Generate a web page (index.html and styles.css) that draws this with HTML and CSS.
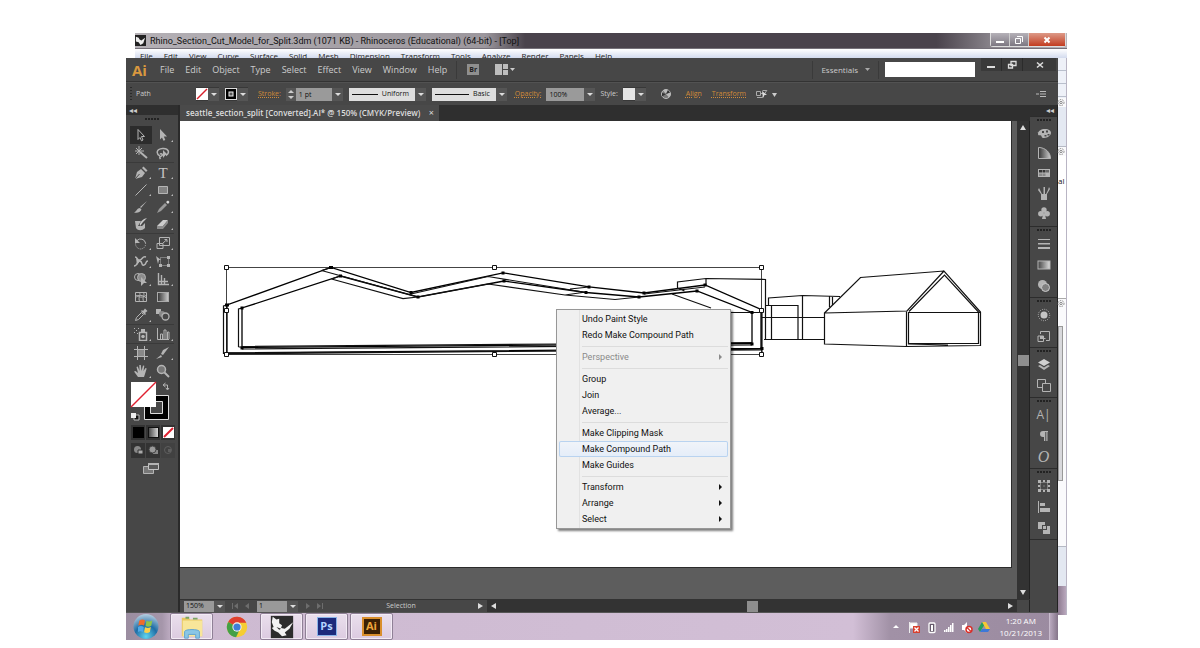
FILE: index.html
```html
<!DOCTYPE html>
<html lang="en">
<head>
  <meta charset="UTF-8" />
  <meta name="viewport" content="width=device-width, initial-scale=1.0" />
  <title>seattle_section_split - Illustrator</title>
  <link rel="stylesheet" href="styles.css">
</head>
<body>
<div class="desktop">

  <!-- Rhino window, behind -->
  <header class="rhino-title">
    <svg class="rhino-icon" viewBox="0 0 12 12"><rect width="12" height="12" fill="#222"/><path d="M1 2l3 1 1 2 2 1 4-3-2 6-3 2-2-3-3-1z" fill="#eee"/></svg>
    <span class="rhino-name">Rhino_Section_Cut_Model_for_Split.3dm (1071 KB) - Rhinoceros (Educational) (64-bit) - [Top]</span>
    <div class="win-buttons">
      <button aria-label="Minimize"><svg viewBox="0 0 12 10"><path d="M2 6h8v2H2z" fill="#fff"/></svg></button>
      <button aria-label="Restore"><svg viewBox="0 0 12 10"><path d="M4 1.500h5.500V7M2.500 3.500h5v5h-5z" fill="none" stroke="#fff"/></svg></button>
      <button class="red" aria-label="Close"><svg viewBox="0 0 12 10"><path d="M3.500 2.500l5 5M8.500 2.500l-5 5" stroke="#fff" stroke-width="2"/></svg></button>
    </div>
  </header>
  <nav class="rhino-menu">
    <span>File</span><span>Edit</span><span>View</span><span>Curve</span><span>Surface</span><span>Solid</span><span>Mesh</span><span>Dimension</span><span>Transform</span><span>Tools</span><span>Analyze</span><span>Render</span><span>Panels</span><span>Help</span>
  </nav>

  <div class="screen">
    <div class="front">
      <div class="ai">
        <!-- menu bar -->
        <div class="menubar">
          <span class="ai-logo">Ai</span>
          <nav class="menus">
            <button>File</button><button>Edit</button><button>Object</button><button>Type</button><button>Select</button><button>Effect</button><button>View</button><button>Window</button><button>Help</button>
          </nav>
          <i class="vsep"></i>
          <button class="bridge">Br</button>
          <button class="arrange" aria-label="Arrange documents"><svg viewBox="0 0 20 11"><path d="M0 0h7v11H0zM8 0h5v5H8zM8 6h5v5H8z" fill="#bdbdbd"/><path d="M15 4h5l-2.500 3z" fill="#ccc"/></svg></button>
          <div class="menubar-right">
            <i class="vsep"></i>
            <button class="workspace">Essentials <svg viewBox="0 0 5 3"><path d="M0 0h5L2.500 3z" fill="#aaa"/></svg></button>
            <i class="vsep"></i>
            <input class="search" type="text" aria-label="Search">
            <div class="ai-win">
              <button aria-label="Minimize"><svg viewBox="0 0 12 12"><path d="M2 7h8v2H2z" fill="#ddd"/></svg></button>
              <button aria-label="Restore"><svg viewBox="0 0 12 12"><path d="M5 2.500h5v4H5zM2.500 5.500h4v3.500h-4z" fill="none" stroke="#ddd" stroke-width="1.300"/></svg></button>
              <button aria-label="Close"><svg viewBox="0 0 12 12"><path d="M3 3.500l6 5M9 3.500l-6 5" stroke="#ddd" stroke-width="1.600"/></svg></button>
            </div>
          </div>
        </div>

        <!-- control bar -->
        <div class="control">
          <i class="grip-v"></i>
          <span class="obj">Path</span>
          <button class="swatch" aria-label="Fill"><svg viewBox="0 0 12 12"><rect width="12" height="12" fill="#fff"/><path d="M1 11L11 1" stroke="#d8202c" stroke-width="1.500"/></svg><i class="dd"></i></button>
          <button class="swatch" aria-label="Stroke colour"><svg viewBox="0 0 12 12"><rect x=".5" y=".5" width="11" height="11" fill="#000" stroke="#ddd"/><rect x="4" y="4" width="4" height="4" fill="#555" stroke="#eee"/></svg><i class="dd"></i></button>
          <label class="link" for="weight">Stroke:</label>
          <div class="combo">
            <i class="spin"></i><input id="weight" type="text" value="1 pt"><button class="dd" aria-label="Weights"></button>
          </div>
          <button class="profile"><i class="stroke-line"></i>Uniform<i class="dd"></i></button>
          <button class="profile brush"><i class="stroke-line"></i>Basic<i class="dd"></i></button>
          <label class="link" for="opacity">Opacity:</label>
          <div class="combo"><input id="opacity" type="text" value="100%"><button class="dd" aria-label="Opacity values"></button></div>
          <span class="style-label">Style:</span>
          <button class="swatch" aria-label="Style"><svg viewBox="0 0 12 12"><rect width="12" height="12" fill="#e4e4e4"/></svg><i class="dd"></i></button>
          <button class="recolor" aria-label="Recolor"><svg viewBox="0 0 12 12"><circle cx="6" cy="6" r="4.500" fill="#777" stroke="#bbb"/><path d="M6 6L3 2.500A4.500 4.500 0 0 1 8 2zM6 6l4-1.500A4.500 4.500 0 0 1 9 9.500z" fill="#bbb"/><path d="M6 6L2 5v3.500zM6 6l2-4 2 2.500z" fill="#333"/></svg></button>
          <a class="link" href="#">Align</a>
          <a class="link" href="#">Transform</a>
          <button class="isolate" aria-label="Isolate"><svg viewBox="0 0 22 10"><path d="M.5 2.500h4v4h-4zM1 8.500h5M5 4.500h2M6.500 1.500h4M11 1L6 9" fill="none" stroke="#aaa"/><path d="M6 2l5 4H8.500L7 9z" fill="#ddd"/><path d="M16 4h5l-2.500 4z" fill="#ccc"/></svg></button>
          <svg class="flyout" viewBox="0 0 10 8"><path d="M0 4h3M4 1.500h6M4 4h6M4 6.500h6" stroke="#bbb"/></svg>
        </div>

        <div class="work">
          <!-- tools -->
          <aside class="tools">
            <div class="panel-head"><span>◂◂</span></div>
            <i class="grip"></i>
            <div class="group">
              <button class="tool on" aria-label="Selection"><svg viewBox="0 0 14 14"><path d="M4 1.500l6.500 7H7.500l1.500 3.500-1.500.8L6 9.500l-2 2z" class="ln"/></svg></button>
              <button class="tool more" aria-label="Direct selection"><svg viewBox="0 0 14 14"><path d="M4 1l7 7.500H7.800L9.300 12l-1.800.8L6 9.500 4 11.500z"/></svg></button>
              <button class="tool" aria-label="Magic wand"><svg viewBox="0 0 14 14"><path d="M6 6l7 6" class="ln th"/><path d="M5 0v9M1 5h9M2 2l6 6M8 2L2 8" class="ln"/></svg></button>
              <button class="tool" aria-label="Lasso"><svg viewBox="0 0 14 14"><path d="M4 10C0 8 0 3 6.500 2.500S14 7 10 9.500M4 8c2-1 3 1 1.500 2S3 11 4.500 13" class="ln" stroke-width="1.500"/><path d="M7 4l5 5H9.500l-2.500 3z"/></svg></button>
            </div>
            <div class="group tight">
              <button class="tool more" aria-label="Pen"><svg viewBox="0 0 14 14"><path d="M1 13l2-7 4-3 4 4-3 4z"/><path d="M8 2l1.500-1.500 4 4L12 6z"/><path d="M1 13l4.500-5" stroke="#474747"/></svg></button>
              <button class="tool more type" aria-label="Type">T</button>
              <button class="tool more" aria-label="Line"><svg viewBox="0 0 14 14"><path d="M1.500 12.500l11-11" class="ln"/></svg></button>
              <button class="tool more" aria-label="Rectangle"><svg viewBox="0 0 14 14"><path d="M2.500 3.500h9v7h-9z" fill="#828282" stroke="#b4b4b4"/></svg></button>
              <button class="tool" aria-label="Paintbrush"><svg viewBox="0 0 14 14"><path d="M13 1L7 8l-1-1zM6 8l1.500 1.500C6 13 3 13 0 12.500 3 11 3 8 6 8z"/></svg></button>
              <button class="tool more" aria-label="Pencil"><svg viewBox="0 0 14 14"><path d="M1 13l2-4 6-6 2 2-6 6z" fill="#999"/><path d="M10 2l2-1.500L13.500 2 12 4z" fill="#ddd"/></svg></button>
              <button class="tool" aria-label="Blob brush"><svg viewBox="0 0 14 14"><path d="M1 4h6L4 9h4l3-3v5c-3 3-7 3-9 0z"/><path d="M13 1L9 5 6 9C5 5 9 2 13 1z" fill="#ccc"/></svg></button>
              <button class="tool more" aria-label="Eraser"><svg viewBox="0 0 14 14"><path d="M1 9l6-6h5L7 9z" fill="#ccc"/><path d="M1 9h6v3H1zM7 9l5-6v3l-5 6z" fill="#8c8c8c"/></svg></button>
            </div>
            <div class="group">
              <button class="tool more" aria-label="Rotate"><svg viewBox="0 0 14 14"><path d="M3 4.500a5 5 0 0 1 8.500 2.500" class="ln"/><path d="M11.500 7A5 5 0 1 1 3 4.500" class="ln" stroke-dasharray="1 1"/><path d="M1 2v5h5z"/></svg></button>
              <button class="tool more" aria-label="Scale"><svg viewBox="0 0 14 14"><path d="M3.500 1.500h10v8h-10zM1 7.500h6v5H1zM7 7l4-3.500M8.500 3.500H11V6" class="ln"/></svg></button>
              <button class="tool more" aria-label="Width"><svg viewBox="0 0 14 14"><path d="M0 12c4 0 3-6 6-5s1 5 4 4 1-4 4-4M1 3c3 0 2 4 5 3s2-4 6-3" class="ln" stroke-width="1.500"/><path d="M2 4l4 3-3 4z"/></svg></button>
              <button class="tool" aria-label="Free transform"><svg viewBox="0 0 14 14"><path d="M4.500 3.500h8v8h-8z" class="ln" stroke-dasharray="1 1"/><path d="M0 2l5 4H3l-1 4zM11 2h3v3h-3zM11 10h3v3h-3zM3 10h3v3H3z"/></svg></button>
              <button class="tool more" aria-label="Shape builder"><svg viewBox="0 0 14 14"><circle cx="4" cy="5" r="3.500" class="ln"/><circle cx="7.500" cy="5.500" r="4" fill="#8c8c8c" stroke="#b4b4b4"/><path d="M7 5l6 6h-3l-3 3z"/></svg></button>
              <button class="tool more" aria-label="Perspective grid"><svg viewBox="0 0 14 14"><path d="M2.500 1v11.500H13M5.500 3v9M8.500 6v6M2 9.500h10" class="ln" stroke-width="1.400"/></svg></button>
              <button class="tool" aria-label="Mesh"><svg viewBox="0 0 14 14"><path d="M1.500 2.500h11v9h-11zM1 8c4-4 4 2 12-3M5 2c3 4-2 5 1 10M9 2c3 4-2 5 1 10M1 5c4 2 7-2 12 4" class="ln"/></svg></button>
              <button class="tool" aria-label="Gradient"><svg viewBox="0 0 14 14"><rect x="1.500" y="2.500" width="11" height="9" fill="url(#g)" stroke="#aaa"/></svg></button>
              <button class="tool more" aria-label="Eyedropper"><svg viewBox="0 0 14 14"><path d="M1.500 12.500l1-3 5-5 2 2-5 5z" class="ln"/><path d="M7 3l1-1 1 1 2-2.500 2.500 2.500L11 5l1 1-1 1z"/></svg></button>
              <button class="tool" aria-label="Blend"><svg viewBox="0 0 14 14"><path d="M0 1h5v5H0z"/><circle cx="6" cy="6" r="3" fill="#888"/><circle cx="9.500" cy="8.500" r="3.500" fill="#474747" stroke="#b4b4b4" stroke-width="1.300"/></svg></button>
            </div>
            <div class="group">
              <button class="tool more" aria-label="Symbol sprayer"><svg viewBox="0 0 14 14"><path d="M5.500 5.500h7v8h-7z" class="ln" stroke-width="1.500"/><path d="M7 2h4v3H7zM0 1h1v1H0zM2 3h1v1H2zM4 1h1v1H4zM0 5h1v1H0zM3 6h1v1H3z"/><circle cx="9" cy="9.500" r="1.800"/></svg></button>
              <button class="tool more" aria-label="Graph"><svg viewBox="0 0 14 14"><path d="M1.500 1v11.500H13M4.500 12V7h2v5M8 12V3h2v9M11.500 12V5h1.500v7" class="ln"/></svg></button>
            </div>
            <div class="group">
              <button class="tool" aria-label="Artboard"><svg viewBox="0 0 14 14"><path d="M3.500 0v14M10.500 0v14M0 3.500h14M0 10.500h14" class="ln"/><path d="M4 4h6v6H4z" fill="#888"/></svg></button>
              <button class="tool more" aria-label="Slice"><svg viewBox="0 0 14 14"><path d="M13 1L7 4 5 8l2 1zM5 9L0 13l6-2z"/></svg></button>
              <button class="tool more" aria-label="Hand"><svg viewBox="0 0 14 14"><path d="M4 13L0 7.500 1.500 7 4 9 2.500 3l1.300-.5L5.500 7 5.300 1h1.500l.7 6L9 1.500l1.300.3L9.500 7l2-3 1.200.6L11 10l-1 3z"/></svg></button>
              <button class="tool" aria-label="Zoom"><svg viewBox="0 0 14 14"><circle cx="5.500" cy="5.500" r="4" fill="#777" stroke="#b4b4b4" stroke-width="1.500"/><path d="M8.500 8.500l4.500 4.500" class="ln th"/></svg></button>
            </div>
            <svg class="fillstroke" viewBox="0 0 44 40">
              <path d="M14.500 14.500h24v24h-24z" fill="#000" stroke="#ddd"/>
              <path d="M20.500 20.500h12v12h-12z" fill="#474747" stroke="#ddd"/>
              <path d="M1 1h25v25H1z" fill="#fff"/><path d="M1 26L26 1" stroke="#e02030" stroke-width="1.500"/>
              <path d="M34 4h3.500v4M35.500 2L33 4l2.500 2M36 7l1.500 2L39 7" class="ln"/>
              <path d="M4 34h5v5H4z" fill="#111" stroke="#bbb"/><path d="M1 32h5v5H1z" fill="#eee"/>
            </svg>
            <div class="modes">
              <button aria-label="Color"><svg viewBox="0 0 11 11"><rect width="11" height="11" fill="#000"/></svg></button>
              <button aria-label="Gradient fill"><svg viewBox="0 0 11 11"><rect x=".5" y=".5" width="10" height="10" fill="url(#g2)" stroke="#111"/></svg></button>
              <button aria-label="None"><svg viewBox="0 0 11 11"><rect width="11" height="11" fill="#fff"/><path d="M1 10l9-9" stroke="#e02030" stroke-width="2"/></svg></button>
            </div>
            <div class="modes draw">
              <button aria-label="Draw normal"><svg viewBox="0 0 11 11"><circle cx="4.500" cy="4.500" r="3.500" fill="#888"/><path d="M5 5h5v4H5z" fill="#aaa" stroke="#333"/></svg></button>
              <button aria-label="Draw behind"><svg viewBox="0 0 11 11"><path d="M5 5h5v4H5z" fill="#888"/><circle cx="4.500" cy="4.500" r="3.500" fill="#999" stroke="#444"/></svg></button>
              <button aria-label="Draw inside"><svg viewBox="0 0 11 11"><circle cx="5" cy="5" r="3.500" fill="none" stroke="#5e5e5e"/><path d="M5 4h3v3H5z" fill="#5e5e5e"/></svg></button>
            </div>
            <button class="screenmode" aria-label="Screen mode"><svg viewBox="0 0 16 14"><path d="M.5 4.500h10v7H.5z" fill="#777" stroke="#b4b4b4"/><path d="M5.500 1.500h10v6h-10z" fill="#5a5a5a" stroke="#c4c4c4"/><path d="M5 1h11v2H5z"/></svg></button>
          </aside>

          <!-- document -->
          <main class="document">
            <div class="tabs"><div class="tab">seattle_section_split [Converted].AI* @ 150% (CMYK/Preview)<button aria-label="Close tab">×</button></div></div>
            <div class="view">
              <div class="pasteboard">
                <div class="artboard">
                  <svg class="drawing" viewBox="180 121 831 446" preserveAspectRatio="xMinYMin">
                    <!-- selection bounds -->
                    <path d="M226.500 267.500h535v87h-535z" class="bounds"/>
                    <!-- section cut -->
                    <path class="cut" d="M227 353V305L331 267.500 411 292.500 503 272.800 589 286.800 644 293 705 285 761 309.500V348.500L227 353"/>
                    <path class="cut" d="M242 347.500V308L340.500 276 418 297 504 281 586 292.500 639 297 697 291 752 312.500V343.500L242 347.500"/>
                    <path class="thin" d="M223.500 354V306L227 305M238.500 347V309L242 308M238.500 347h4M321.500 270.500L418 297M331.500 279L403 298.700 418 297M488 276.500L565 289 586 292.500M488 276.500L411 294M488 284L565 295 615 299.500 639 297M418 297L488 284M570 289l19-2M565 295l21-3M321.500 270.500L331 267.500M331.500 279l9-3"/>
                    <path class="thin" d="M224 354L560 351 762 349M242 349L752 345M242 346.500L560 344 752 342.500M224 353L762 350"/>
                    <path class="thin" d="M677.500 289V282L706 278.500 765.500 279.500V339M706 278.500V286M677.500 288l7 3M672 294L711 308M644 294L705 287M731 312.500h31"/>
                    <!-- sheds -->
                    <path class="thin" d="M768.500 305V298L802.500 295.500 840 296.500M766 305.500h32V339M771.500 305v34M802.500 295.500V339M764 339.500h60M762 317.500h62M829.500 296.500V307M832.500 296.500V305M762 310v44"/>
                    <!-- house -->
                    <path class="thin" d="M824.500 313L860.500 277.500 944 271 980.500 312V345.500L906.500 346.500 824.500 344V313L907 311 944 271M906.500 311V346.500M909 311.500L944.500 275 978.500 312V343.500L908.500 343.500V312.500H980.500M908 344l40 1"/>
                    <path d="M225 303.500h4v3h-4zM329 266h4v3h-4zM339 274.500h3v3h-3zM409.500 291h3v3h-3zM416.500 295.500h3v3h-3zM501.500 271.500h3v3h-3zM502.500 279.500h3v3h-3zM587.500 285.500h3v3h-3zM584.500 291h3v3h-3zM642.500 291.500h3v3h-3zM637.500 295.500h3v3h-3zM703.500 283.500h3v3h-3zM695.500 289.500h3v3h-3zM750.500 311h3v3h-3zM750.500 342.500h3v3h-3zM760.500 347h3v3h-3zM240.500 306.500h3v3h-3zM240.500 346.500h3v3h-3z"/>
                    <path class="handle" d="M224.500 265.500h4v4h-4zM492.500 265.500h4v4h-4zM759.500 265.500h4v4h-4zM224.500 308.500h4v4h-4zM759.500 308.500h4v4h-4zM224.500 352.500h4v4h-4zM492.500 352.500h4v4h-4zM759.500 352.500h4v4h-4z"/>
                  </svg>
                  <div class="context-menu">
                    <button>Undo Paint Style</button>
                    <button>Redo Make Compound Path</button>
                    <hr>
                    <button class="sub" disabled>Perspective</button>
                    <hr>
                    <button>Group</button>
                    <button>Join</button>
                    <button>Average...</button>
                    <hr>
                    <button>Make Clipping Mask</button>
                    <button class="hover">Make Compound Path</button>
                    <button>Make Guides</button>
                    <hr>
                    <button class="sub">Transform</button>
                    <button class="sub">Arrange</button>
                    <button class="sub">Select</button>
                  </div>
                </div>
              </div>
              <div class="vscroll"><i class="up"></i><i class="thumb"></i><i class="down"></i></div>
            </div>
            <div class="status">
              <div class="status-left">
                <input class="zoom" type="text" value="150%" aria-label="Zoom level"><button class="dd" aria-label="Zoom levels"></button>
                <svg class="nav" viewBox="0 0 18 8"><path d="M0 1h1v6H0zM6 1v6L2 4zM17 1v6l-4-3z" fill="#6d6d6d"/></svg>
                <input class="page" type="text" value="1" aria-label="Artboard"><button class="dd" aria-label="Artboards"></button>
                <svg class="nav" viewBox="0 0 18 8"><path d="M1 1v6l4-3zM12 1v6l4-3zM17 1h1v6h-1z" fill="#6d6d6d"/></svg>
                <span class="status-text">Selection</span>
                <i class="right"></i>
              </div>
              <div class="hscroll"><i class="left"></i><i class="thumb"></i><i class="right"></i></div>
              <i class="corner"></i>
            </div>
          </main>

          <!-- panel dock -->
          <aside class="dock">
            <div class="panel-head"><span>◂◂</span></div>
            <div class="dock-group">
              <i class="grip"></i>
              <button aria-label="Color"><svg viewBox="0 0 14 14"><path d="M1 8c0-3 3-5 7-5s6 2 6 4-3 5-7 5c-3 0-2-2-3-2.500S1 10 1 8z"/><path d="M5 5h2v2H5zM9 4.500h2v2H9zM10.500 8h2v1.500h-2zM7.500 9h2v1.500h-2z" fill="#474747"/><path d="M0 6l5 1-1 1z"/></svg></button>
              <button aria-label="Color guide"><svg viewBox="0 0 14 14"><path d="M1.500 1.500v11h12c0-6-5-11-12-11z" fill="url(#g)" stroke="#b4b4b4"/></svg></button>
              <button aria-label="Swatches"><svg viewBox="0 0 14 14"><path d="M1 3h12v8H1z"/><path d="M2 4h3v2.500H2zM5.500 4h3v2.500h-3z" fill="#333"/><path d="M9 4h3v2.500H9z" fill="#666"/><path d="M2 7.500h3V10H2zM5.500 7.500h3V10h-3z" fill="#888"/></svg></button>
              <button aria-label="Brushes"><svg viewBox="0 0 14 14"><path d="M4 8h6v6H4zM6.500 1h1.500v7H6.500zM3 4l2 4H4L1 4l1-2zM9 8l2-4 1-3 1 2-3 5z"/></svg></button>
              <button aria-label="Symbols"><svg viewBox="0 0 14 14"><circle cx="7" cy="4" r="2.700"/><circle cx="3.800" cy="7.800" r="2.700"/><circle cx="10.200" cy="7.800" r="2.700"/><path d="M6.500 6h1l1.500 7H5z"/></svg></button>
            </div>
            <div class="dock-group">
              <i class="grip"></i>
              <button aria-label="Stroke"><svg viewBox="0 0 14 14"><path d="M1 2h12v1H1zM1 6h12v1.500H1zM1 10h12v2H1z"/></svg></button>
              <button aria-label="Gradient panel"><svg viewBox="0 0 14 14"><rect x="1" y="3" width="12" height="8" fill="url(#g2)" stroke="#b4b4b4"/></svg></button>
              <button aria-label="Transparency"><svg viewBox="0 0 14 14"><circle cx="5.500" cy="5.500" r="4.500"/><circle cx="8.500" cy="8.500" r="4" fill="#808080" stroke="#ccc"/></svg></button>
            </div>
            <div class="dock-group">
              <i class="grip"></i>
              <button aria-label="Appearance"><svg viewBox="0 0 14 14"><circle cx="7" cy="7" r="3.500" fill="#c4c4c4"/><circle cx="7" cy="7" r="5.700" class="ln" stroke-dasharray="1 1.200"/></svg></button>
              <button aria-label="Graphic styles"><svg viewBox="0 0 14 14"><path d="M3.500 5V2.500h9v9H9M1 7h5.500v5.500H1zM3.500 9.500h5" class="ln"/><path d="M3 7h4v3H3z"/></svg></button>
            </div>
            <div class="dock-group">
              <i class="grip"></i>
              <button aria-label="Layers"><svg viewBox="0 0 14 14"><path d="M7 1l6 3.500L7 8 1 4.500z" fill="#d0d0d0"/><path d="M1 8l2-1 4 2.500L11 7l2 1-6 4z"/></svg></button>
              <button aria-label="Artboards"><svg viewBox="0 0 14 14"><path d="M5 8.500H.500v-8h8V4M5.500 4.500h8v8h-8z" class="ln"/></svg></button>
            </div>
            <div class="dock-group">
              <i class="grip"></i>
              <button class="glyph" aria-label="Character">A|</button>
              <button aria-label="Paragraph"><svg viewBox="0 0 14 14"><path d="M11 2H6a3 3 0 0 0 0 6h1v4h1.300V3h1v9H10.500V3H11z"/></svg></button>
              <button class="glyph it" aria-label="OpenType">O</button>
            </div>
            <div class="dock-group">
              <i class="grip"></i>
              <button aria-label="Transform"><svg viewBox="0 0 14 14"><path d="M3.500 3.500h7v7h-7z" class="ln" stroke-dasharray="1 1"/><path d="M1 1h3v3H1zM6 1h2v2H6zM10 1h3v3h-3zM1 6h2v2H1zM6.500 6.500h1v1h-1zM11 6h2v2h-2zM1 10h3v3H1zM6 11h2v2H6zM10 10h3v3h-3z"/></svg></button>
              <button aria-label="Align"><svg viewBox="0 0 14 14"><path d="M1 1h1v12H1zM3 3h5v3H3zM3 8h10v4H3z"/></svg></button>
              <button aria-label="Pathfinder"><svg viewBox="0 0 14 14"><path d="M1 1h7v3H5v4H1zM6 5h3v3H6zM10 5h3v8H6V9h4z"/></svg></button>
            </div>
          </aside>
        </div>
      </div>

      <footer class="taskbar">
        <button class="start" aria-label="Start"><svg viewBox="0 0 28 28"><circle cx="14" cy="14" r="13" fill="url(#orb)"/><path d="M7 8c2-1.500 4-1.500 6-.3l-1 5.300c-2-1-4-1-6 .3z" fill="#ee6b2d"/><path d="M14.500 8c2 1.200 4 1 6-.3l-1 5.500c-2 1.300-4 1.300-6 .3z" fill="#8fc54a"/><path d="M5.700 14.500c2-1.200 4-1.200 6 0l-1 5.200c-2-1-3.500-1-5 0z" fill="#4fa8e8"/><path d="M13 14.700c2 1.200 4 1 6-.2l-1 5.300c-2 1.200-4 1.200-6 .2z" fill="#fbd04a"/></svg></button>
        <button class="task open" aria-label="Explorer"><svg viewBox="0 0 28 28"><path d="M3 4h7l2 2h13v18H3z" fill="#e8c860"/><path d="M4 7h21v17H4z" fill="#f8e69a"/><path d="M7 3h4v2H7zM15 4h5v2h-5z" fill="#7ba464"/><path d="M6 26v-7c0-3 16-3 16 0v7h-4v-4h-8v4z" fill="#8ac6e6" stroke="#5fa3cf"/></svg></button>
        <button class="task" aria-label="Chrome"><svg viewBox="0 0 28 28"><circle cx="14" cy="14" r="11" fill="#f5cd32"/><path d="M14 14L4.500 8.500A11 11 0 0 1 24 9.500H14z" fill="#df3e2f"/><path d="M14 14L4.500 8.500A11 11 0 0 0 13 25l4-8.500z" fill="#43a047"/><circle cx="14" cy="14" r="5" fill="#f4f4f4"/><circle cx="14" cy="14" r="3.900" fill="#3f7fd8"/></svg></button>
        <button class="task open" aria-label="Rhinoceros"><svg viewBox="0 0 28 28"><rect x="2" y="2" width="24" height="24" fill="#2c2c2c"/><path d="M4 3l4 3 3-1 0 5 3 2-1 3 4 1 9-7-4 7-5 4 2 3-5 1-4-4-4-2-3-3 2-1-2-5z" fill="#f2f2f2"/><path d="M8 14l5 2-2 1z" fill="#2c2c2c"/></svg></button>
        <button class="task open" aria-label="Photoshop"><span class="app ps">Ps</span></button>
        <button class="task open" aria-label="Illustrator"><span class="app il">Ai</span></button>
        <div class="tray">
          <svg viewBox="0 0 90 14" class="tray-icons">
            <path d="M0 8h6L3 5z" fill="#fff"/>
            <path d="M16.500 2v11M17 3h7v5h-7z" fill="#fff" stroke="#eee"/><path d="M20 6h7v7h-7z" fill="#d8402f"/><path d="M21.500 7.500l4 4M25.500 7.500l-4 4" stroke="#fff" stroke-width="1.300"/>
            <rect x="36" y="3" width="6" height="9.500" rx="1" fill="#665a6b" stroke="#fff" stroke-width="1.300"/><path d="M38 5h2v6h-2z" fill="#fff"/>
            <path d="M51 10h1.500v2H51zM53 9h1.500v3H53zM55 7h1.500v5H55zM57 5h1.500v7H57zM59 3h1.500v9H59z" fill="#fff"/>
            <path d="M69 5h2l3-3v11l-3-3h-2z" fill="#fff"/><circle cx="76" cy="9.500" r="3" fill="#fff" stroke="#d8302a" stroke-width="1.500"/><path d="M74 7.500l4 4" stroke="#d8302a" stroke-width="1.300"/>
          </svg>
          <svg class="drive" viewBox="0 0 12 12"><path d="M4 1h4l4 7H8z" fill="#f6c834"/><path d="M4 1l2 3.500L2 11 0 8z" fill="#25a05a"/><path d="M4 8h8l-2 3H2z" fill="#3c78d8"/></svg>
          <div class="clock"><span>1:20 AM</span><span>10/21/2013</span></div>
          <button class="show-desktop" aria-label="Show desktop"></button>
        </div>
      </footer>
    </div>

    <!-- right edge of the window behind -->
    <div class="rhino-edge">
      <i class="e-bars"></i>
      <svg viewBox="0 0 9 9"><circle cx="4" cy="4.500" r="3" fill="none" stroke="#888" stroke-dasharray="1.500 1"/><circle cx="4" cy="4.500" r="1.200" fill="none" stroke="#888"/></svg>
      <i class="e-panel"></i>
      <svg viewBox="0 0 9 9"><circle cx="4" cy="4.500" r="3" fill="none" stroke="#888" stroke-dasharray="1.500 1"/><circle cx="4" cy="4.500" r="1.200" fill="none" stroke="#888"/></svg>
      <div class="e-list"><span>al</span></div>
      <svg viewBox="0 0 9 9"><circle cx="4" cy="4.500" r="3" fill="none" stroke="#888" stroke-dasharray="1.500 1"/><circle cx="4" cy="4.500" r="1.200" fill="none" stroke="#888"/></svg>
      <div class="e-scroll"><i></i></div>
      <i class="e-foot"></i>
      <i class="e-frame"></i>
    </div>
  </div>
</div>

<svg width="0" height="0" class="defs">
  <defs>
    <linearGradient id="g"><stop offset="0" stop-color="#333"/><stop offset="1" stop-color="#ccc"/></linearGradient>
    <linearGradient id="g2"><stop offset="0" stop-color="#444"/><stop offset="1" stop-color="#ddd"/></linearGradient>
    <radialGradient id="orb" cx=".5" cy=".9" r=".9"><stop offset="0" stop-color="#5fd4ee"/><stop offset=".5" stop-color="#1f6ea6"/><stop offset="1" stop-color="#b8cfe0"/></radialGradient>
  </defs>
</svg>
</body>
</html>
```

FILE: styles.css
```css
* { box-sizing: border-box; }
body { margin: 0; background: #fff; font-family: "Open Sans", "Noto Sans", sans-serif; font-size: 8px; line-height: 12px; color: #ccc; }
button, input { font: inherit; color: inherit; margin: 0; padding: 0; border: 0; background: none; border-radius: 0; min-width: 0; }
button { display: flex; align-items: center; justify-content: center; white-space: nowrap; }
svg { display: block; flex: none; }
i { display: block; flex: none; }
.defs { position: absolute; }
.desktop { padding: 33px 133px 0 126px; }

/* rhino */
.rhino-title { display: flex; align-items: center; height: 16px; margin-left: 9px; background: linear-gradient(90deg, #b4b0b5 0, #9c979d 350px, #4a434c 390px, #4a434c 86%, #8a858c 92%, #b8b4ba); border-bottom: 1px solid #76717a; color: #111; }
.rhino-icon { width: 11px; height: 11px; margin-right: 4px; }
.rhino-name { font-family: Roboto, sans-serif; font-size: 9px; white-space: nowrap; }
.win-buttons { display: flex; align-self: flex-start; margin-left: auto; margin-right: 1px; border: 1px solid #ddd; border-top: 0; border-radius: 0 0 3px 3px; }
.win-buttons button { width: 19px; height: 13px; background: linear-gradient(#b5b1b8, #7d7882); border-right: 1px solid #ccc; }
.win-buttons button.red { width: 36px; background: linear-gradient(#dd9a88, #c23c20); border: 0; }
.win-buttons svg { width: 12px; height: 10px; }
.rhino-menu { display: flex; gap: 11px; height: 9px; margin-left: 9px; padding: 1px 5px 0; overflow: hidden; background: linear-gradient(#fff, #d3dbee); color: #222; }

.screen { display: flex; align-items: flex-start; }
.front { flex: 1; min-width: 0; }
.ai { background: #474747; }

/* menu bar */
.menubar { display: flex; align-items: center; height: 24px; padding-left: 6px; border-bottom: 1px solid #333; font-size: 9px; }
.ai-logo { width: 28px; font-size: 15px; font-weight: bold; line-height: 16px; color: #d9983f; }
.menus { display: flex; gap: 11px; }
.vsep { width: 1px; height: 18px; background: #3a3a3a; }
.menus + .vsep { margin: 0 10px 0 9px; }
.bridge { width: 12px; height: 11px; background: #8f8f8f; color: #222; font-size: 7px; font-weight: bold; }
.arrange { margin-left: 16px; }
.arrange svg { width: 20px; height: 11px; }
.menubar-right { display: flex; align-items: center; margin-left: auto; align-self: stretch; }
.workspace { gap: 7px; padding: 0 8px 0 8px; font-size: 8px; }
.workspace svg { width: 5px; height: 3px; }
.search { width: 90px; height: 15px; margin: 0 6px 0 6px; background: #fff; color: #222; }
.ai-win { display: flex; align-self: flex-start; margin-right: 2px; background: #2b2b2b; border-radius: 0 0 2px 2px; gap: 1px; }
.ai-win button { width: 20px; height: 13px; background: #3a3a3a; }
.ai-win button:last-child { width: 33px; }
.ai-win svg { width: 12px; height: 12px; }

/* control bar */
.control { display: flex; align-items: center; height: 23px; padding-left: 4px; font-size: 7px; border-top: 1px solid #525252; }
.grip-v { width: 2px; height: 15px; margin-right: 4px; background: repeating-linear-gradient(#2a2a2a 0 1px, #474747 1px 3px); }
.obj { width: 60px; }
.swatch { height: 14px; margin-right: 6px; background: #383838; }
.swatch svg { width: 12px; height: 12px; }
.dd { position: relative; width: 11px; height: 13px; background: #555; }
.dd::after { content: ""; position: absolute; left: 3px; top: 5px; border: solid transparent; border-width: 3px 3px 0; border-top-color: #ddd; }
.link { color: #d08a38; text-decoration: underline; text-decoration-style: dotted; }
.combo { display: flex; align-items: center; }
.combo input { height: 13px; padding-left: 3px; background: #9a9a9a; color: #111; }
.spin { position: relative; width: 10px; height: 13px; background: #555; }
.spin::before, .spin::after { content: ""; position: absolute; left: 2px; border: solid transparent; }
.spin::before { top: 2px; border-width: 0 3px 3px; border-bottom-color: #ccc; }
.spin::after { bottom: 2px; border-width: 3px 3px 0; border-top-color: #ccc; }
#weight { width: 36px; }
#opacity { width: 38px; }
.control label.link { margin: 0 5px 0 4px; }
.profile { height: 13px; margin-left: 6px; padding-left: 3px; background: #dedede; color: #111; }
.profile .dd { margin-left: 6px; }
.profile.brush { margin-right: 4px; }
.stroke-line { width: 26px; height: 1px; margin-right: 4px; background: #111; }
.profile.brush .stroke-line { width: 34px; }
.style-label { margin: 0 5px 0 5px; }
.recolor { margin: 0 14px 0 8px; }
.recolor svg { width: 12px; height: 12px; }
.control a { margin-right: 10px; }
.isolate svg { width: 22px; height: 10px; }
.flyout { width: 10px; height: 8px; margin: 0 12px 0 auto; }

.work { display: flex; height: 507px; }
.panel-head { height: 10px; background: #2f2f2f; color: #ccc; line-height: 9px; padding: 0 3px; }
.grip { width: 14px; height: 2px; background: repeating-linear-gradient(90deg, #222 0 2px, #474747 2px 3px); }

/* tools */
.tools { width: 54px; flex: none; border-right: 2px solid #2a2a2a; fill: #b4b4b4; }
.tools > .grip { margin: 3px auto 6px; }
.group { display: flex; flex-wrap: wrap; padding-left: 4px; border-top: 1px solid #3a3a3a; margin-right: 4px; }
.grip + .group { border: 0; }
.tool { position: relative; width: 22px; height: 18px; }
.tight .tool { height: 17px; }
.tight { padding-top: 1px; padding-bottom: 1px; }
.tool svg { width: 14px; height: 14px; }
.tool.on { background: #2c2c2c; }
.tool.more::after { content: ""; position: absolute; right: 1px; bottom: 2px; border: 1px solid; border-color: transparent #bbb #bbb transparent; }
.type { font-family: "Liberation Serif", serif; font-size: 15px; color: #c4c4c4; }
.ln { fill: none; stroke: #b4b4b4; }
.th { stroke-width: 2; }
.fillstroke { width: 44px; height: 40px; margin: 1px 0 0 4px; }
.modes { display: flex; justify-content: space-between; width: 44px; margin: 4px 0 0 5px; }
.modes button { width: 14px; height: 15px; background: #333; }
.modes svg { width: 11px; height: 11px; }
.modes.draw { margin-top: 3px; }
.modes.draw button:last-child { background: #414141; }
.screenmode { margin: 4px 0 0 17px; }
.screenmode svg { width: 16px; height: 14px; }

/* document */
.document { flex: 1; min-width: 0; display: flex; flex-direction: column; }
.tabs { height: 16px; background: #2f2f2f; }
.tab { display: flex; align-items: center; width: max-content; height: 16px; padding: 0 3px 0 6px; background: #4a4a4a; color: #ddd; font-weight: 600; white-space: nowrap; }
.tab button { width: 10px; margin-left: 6px; font-size: 9px; font-weight: normal; }
.view { flex: 1; display: flex; min-height: 0; }
.pasteboard { flex: 1; padding: 0 5px 32px 0; background: #5d5d5d; }
.artboard { position: relative; height: 447px; background: #fff; border: solid #2c2c2c; border-width: 0 1px 1px 0; }
.drawing { width: 100%; height: 446px; }
.bounds { fill: none; stroke: #444; }
.thin { fill: none; stroke: #111; stroke-width: 1.2; }
.cut { fill: none; stroke: #000; stroke-width: 1.3; }
.handle { fill: #fff; stroke: #111; }
.vscroll, .hscroll { display: flex; justify-content: space-between; align-items: center; background: #333; }
.vscroll { flex-direction: column; width: 13px; padding: 4px 0; border-right: 1px solid #222; }
.vscroll .thumb, .hscroll .thumb { width: 11px; height: 11px; background: #8e8e8e; }
.up, .down, .left, .right { border: 3px solid transparent; }
.up { border-top: 0; border-bottom: 5px solid #ddd; }
.down { border-bottom: 0; border-top: 5px solid #ddd; }
.left { border-left: 0; border-right: 5px solid #ddd; }
.right { border-right: 0; border-left: 5px solid #ddd; }
.status { display: flex; height: 13px; border-top: 1px solid #333; font-size: 7px; }
.status-left { display: flex; align-items: center; width: 307px; padding: 0 4px; background: #474747; }
.status-left input { height: 11px; padding-left: 2px; background: #999; color: #111; }
.status-left .dd { height: 11px; background: #555; }
.status-left .dd::after { top: 4px; }
.zoom, .page { width: 30px; }
.nav { width: 18px; height: 8px; margin: 0 7px; }
.status-text { flex: 1; padding-right: 6px; text-align: center; }
.hscroll { flex: 1; padding: 0 4px; }
.corner { width: 13px; background: #474747; border-right: 1px solid #222; }

/* context menu */
.context-menu { position: absolute; left: 376px; top: 188px; width: 175px; padding: 1px 2px; border: 1px solid #979797; background: linear-gradient(90deg, #f0f0f0 22px, #e2e2e2 22px 23px, #f0f0f0 23px); box-shadow: 2px 2px 2px rgba(0, 0, 0, .5); color: #111; font-family: Roboto, sans-serif; font-size: 9px; }
.context-menu button { position: relative; width: 100%; height: 16px; padding-left: 23px; justify-content: flex-start; color: #111; }
.context-menu button:disabled { color: #8a8a8a; }
.context-menu hr { height: 1px; margin: 3px 0 2px 23px; border: 0; background: #dcdcdc; }
.context-menu .hover { background: linear-gradient(#f1f4f9, #e4edf9); box-shadow: inset 0 0 0 1px #b9d3f0; border-radius: 2px; }
.sub::after { content: ""; margin-left: auto; margin-right: 6px; border: 3px solid transparent; border-right: 0; border-left-color: currentColor; }

/* dock */
.dock { width: 28px; flex: none; border-right: 1px solid #222; fill: #b4b4b4; }
.dock .panel-head { height: 11px; text-align: right; }
.dock-group { padding-bottom: 1px; border-top: 1px solid #2c2c2c; }
.dock-group .grip { margin: 2px auto; }
.dock-group button { width: 100%; height: 21px; }
.panel-head + .dock-group { padding-bottom: 3px; }
.panel-head + .dock-group button { height: 20px; }
.dock-group svg { width: 14px; height: 14px; }
.dock-group:last-child { border-bottom: 1px solid #2c2c2c; }
.dock .glyph { font-size: 12px; color: #b4b4b4; }
.dock .glyph.it { font-family: "Liberation Serif", serif; font-style: italic; font-size: 16px; }

/* taskbar */
.taskbar { display: flex; height: 28px; border-top: 1px solid #555; background: linear-gradient(90deg, #9b8da0 0, #a596aa 36px, #cdbad1 50px, #d2bfd6 78%, #a191a6 82%, #9b8ba0); }
.start { width: 40px; }
.start svg { width: 28px; height: 27px; }
.task { width: 43px; margin-left: 2px; }
.task:nth-child(2) { margin-left: 4px; }
.task svg { width: 26px; height: 26px; }
.task.open { background: linear-gradient(#eadfed, #dccbe0); border: 1px solid #8f8096; border-radius: 2px; box-shadow: inset 0 0 0 1px #f3ebf5; }
.app { width: 20px; height: 19px; line-height: 16px; border: 1px solid; font-size: 11px; font-weight: bold; }
.ps { background: #1d2a7c; border-color: #8ab4e8; color: #b5d4ff; }
.il { background: #3c2105; border: 2px solid #d98e2c; line-height: 14px; color: #f0a63c; }
.tray { display: flex; align-items: center; margin-left: auto; color: #fff; }
.tray-icons { width: 90px; height: 14px; }
.drive { width: 12px; height: 12px; margin-left: -5px; }
.clock { display: flex; flex-direction: column; align-items: center; margin: 0 7px 0 10px; }
.show-desktop { width: 9px; height: 27px; background: linear-gradient(90deg, #b9a9be, #857589); border-left: 1px solid #c9bccd; }

/* edge of the back window */
.rhino-edge { display: flex; flex-direction: column; width: 9px; height: 557px; background: #fafafc; border-right: 1px solid #b9b5c4; }
.rhino-edge svg { width: 9px; height: 9px; margin-left: -1px; }
.e-bars { height: 40px; background: repeating-linear-gradient(#eef1f8 0 12px, #b9bfcc 12px 13px); }
.e-panel { height: 40px; background: #e4e9f2; border-bottom: 1px solid #b5b9c4; }
.e-list { height: 143px; padding-top: 19px; border-bottom: 1px solid #aaa; background: #fff; color: #222; }
.e-scroll { flex: 1; padding-top: 18px; }
.e-scroll i { width: 5px; height: 155px; background: #d8d8dc; border: 1px solid #999; }
.e-foot { height: 40px; background: #e3e8f1; border-top: 1px solid #b5b9c4; }
.e-frame { height: 29px; background: linear-gradient(90deg, #8d7b90, #b9a8bd); }
```
